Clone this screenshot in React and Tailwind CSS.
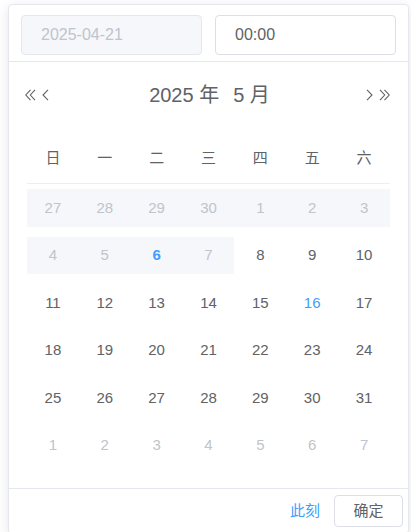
import React from "react";

const weeks = ["日", "一", "二", "三", "四", "五", "六"];

// type: prev/next = other month, off = disabled, today, current
const rows = [
  [[27, "off"], [28, "off"], [29, "off"], [30, "off"], [1, "off"], [2, "off"], [3, "off"]],
  [[4, "off"], [5, "off"], [6, "today"], [7, "off"], [8], [9], [10]],
  [[11], [12], [13], [14], [15], [16, "current"], [17]],
  [[18], [19], [20], [21], [22], [23], [24]],
  [[25], [26], [27], [28], [29], [30], [31]],
  [[1, "next"], [2, "next"], [3, "next"], [4, "next"], [5, "next"], [6, "next"], [7, "next"]],
];

const Chevron = ({ flip }) => (
  <svg width="7" height="12" viewBox="0 0 7 12" className={flip ? "rotate-180" : ""}>
    <polyline points="6,0.8 1,6 6,11.2" fill="none" stroke="#606266" strokeWidth="1.1" />
  </svg>
);

const DoubleChevron = ({ flip }) => (
  <svg width="11" height="12" viewBox="0 0 11 12" className={flip ? "rotate-180" : ""}>
    <polyline points="5.5,0.8 0.8,6 5.5,11.2" fill="none" stroke="#606266" strokeWidth="1.1" />
    <polyline points="10,0.8 5.3,6 10,11.2" fill="none" stroke="#606266" strokeWidth="1.1" />
  </svg>
);

function Cell({ day, type }) {
  const bg = type === "off" || type === "today" ? "bg-[#f5f7fa]" : "";
  let text = "text-[#606266]";
  if (type === "off" || type === "next" || type === "prev") text = "text-[#c0c4cc]";
  if (type === "today") text = "text-[#409eff] font-bold";
  if (type === "current") text = "text-[#409eff]";
  return (
    <div className="py-[5px]">
      <div className={`h-[37.5px] flex items-center justify-center text-[15px] ${bg} ${text}`}>
        {day}
      </div>
    </div>
  );
}

export default function App() {
  return (
    <div
      className="min-h-screen bg-white pt-[4px] pl-[8px] pr-[2px] overflow-hidden"
      style={{ fontFamily: "'Liberation Sans', 'Noto Sans CJK SC', sans-serif" }}
    >
      <div className="w-[401px] bg-white border border-[#e4e7ed] rounded-[4px] shadow-[0_2px_12px_0_rgba(0,0,0,0.1)]">
        {/* time header */}
        <div className="flex gap-[13px] pl-[12px] pr-[12px] pt-[10px] pb-[6px] border-b border-[#e4e7ed]">
          <div className="w-[181px] h-[40px] flex items-center pl-[19px] bg-[#f5f7fa] border border-[#e4e7ed] rounded-[4px] text-[16px] text-[#c0c4cc]">
            2025-04-21
          </div>
          <div className="w-[181px] h-[40px] flex items-center pl-[19px] bg-white border border-[#dcdfe6] rounded-[4px] text-[16px] text-[#606266]">
            00:00
          </div>
        </div>

        {/* month header */}
        <div className="flex items-center justify-between pl-[16px] pr-[18px] pt-[15px] h-[51px]">
          <div className="flex items-center gap-[6px]">
            <DoubleChevron />
            <Chevron />
          </div>
          <div className="flex items-center gap-[14px] text-[20px] text-[#606266] pl-[4px]">
            <span>2025 年</span>
            <span>5 月</span>
          </div>
          <div className="flex items-center gap-[6px]">
            <Chevron flip />
            <DoubleChevron flip />
          </div>
        </div>

        {/* calendar */}
        <div className="mx-[18px] mt-[21px] mb-[19px]">
          <div className="grid grid-cols-7 h-[50px] border-b border-[#ebeef5]">
            {weeks.map((w) => (
              <div key={w} className="flex items-center justify-center text-[15px] text-[#606266]">
                {w}
              </div>
            ))}
          </div>
          {rows.map((r, i) => (
            <div key={i} className="grid grid-cols-7">
              {r.map(([d, t], j) => (
                <Cell key={j} day={d} type={t} />
              ))}
            </div>
          ))}
        </div>

        {/* footer */}
        <div className="flex items-center justify-end gap-[14px] border-t border-[#e4e7ed] pt-[6px] pb-[6px] pr-[5px]">
          <span className="text-[15px] text-[#409eff]">此刻</span>
          <button className="w-[69px] h-[32px] border border-[#dcdfe6] rounded-[4px] bg-white text-[15px] text-[#606266]">
            确定
          </button>
        </div>
      </div>
    </div>
  );
}
